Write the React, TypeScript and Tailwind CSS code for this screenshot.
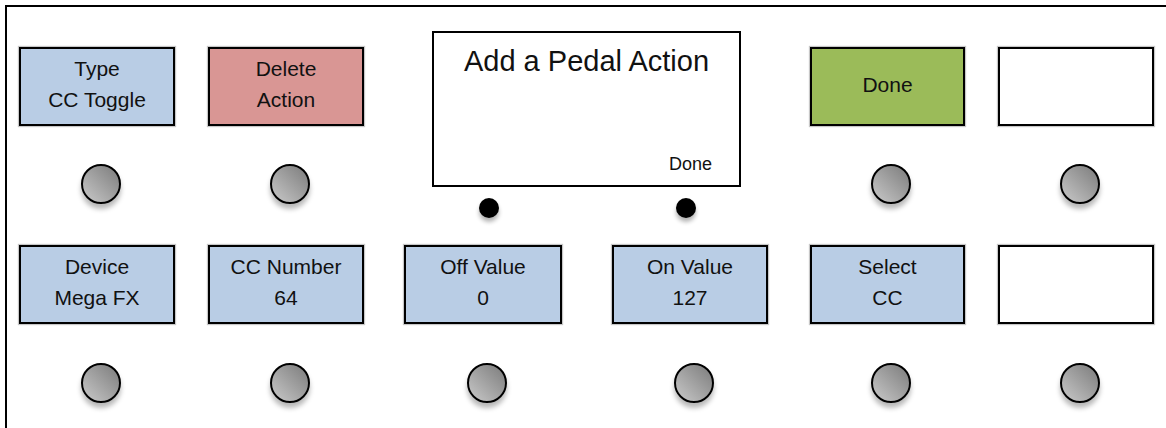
import React from "react";

const font = { fontFamily: '"Liberation Sans", Arial, Helvetica, sans-serif' };

function Box({ lines, color, w = "w-[156px]" }: { lines: string[]; color: string; w?: string }) {
  return (
    <div
      className={`${w} h-[79px] border-2 border-black ${color} shadow-[0_0_1px_1px_rgba(0,0,0,0.22)] flex flex-col items-center justify-center pb-[5px] text-[21px] leading-[31px] text-[#111]`}
    >
      {lines.map((l, i) => (
        <div key={i}>{l}</div>
      ))}
    </div>
  );
}

function Knob() {
  return (
    <div className="flex justify-center pl-[7px]">
      <div className="w-[40px] h-[40px] rounded-full border-2 border-black bg-linear-to-tr from-[#c9c9c9] to-[#7c7c7c] shadow-[0_5px_5px_rgba(0,0,0,0.28)]" />
    </div>
  );
}

function Col({ lines, color, w, className = "", knobGap = "mt-[38px]" }: { lines: string[]; color: string; w?: string; className?: string; knobGap?: string }) {
  return (
    <div className={`flex flex-col ${className}`}>
      <Box lines={lines} color={color} w={w} />
      <div className={knobGap}>
        <Knob />
      </div>
    </div>
  );
}

export default function App() {
  const blue = "bg-[#b9cde5]";
  return (
    <div className="w-[1166px] h-[428px] overflow-hidden bg-white" style={font}>
      <div className="ml-[5px] mt-[5px] w-[1250px] h-[500px] border-l-2 border-t-2 border-black">
        {/* Row 1 */}
        <div className="flex items-start pl-[12px] pt-[24px]">
          <Col lines={["Type", "CC Toggle"]} color={blue} className="mt-[16px]" />
          <Col lines={["Delete", "Action"]} color="bg-[#d99694]" className="mt-[16px] ml-[33px]" />
          <div className="ml-[68px] flex flex-col">
            <div className="w-[309px] h-[156px] border-2 border-black bg-white flex flex-col justify-between">
              <div className="text-center text-[29px] leading-[29px] pt-[14px] text-[#111]">Add a Pedal Action</div>
              <div className="self-end pr-[27px] pb-[12px] text-[18px] leading-[18px] text-[#111]">Done</div>
            </div>
            <div className="flex mt-[11px] pl-[47px]">
              <div className="w-[20px] h-[20px] rounded-full bg-black shadow-[0_4px_4px_rgba(0,0,0,0.3)]" />
              <div className="ml-[177px] w-[20px] h-[20px] rounded-full bg-black shadow-[0_4px_4px_rgba(0,0,0,0.3)]" />
            </div>
          </div>
          <Col lines={["Done"]} color="bg-[#9bbb59]" w="w-[155px]" className="mt-[16px] ml-[69px]" />
          <Col lines={[]} color="bg-white" className="mt-[16px] ml-[33px]" />
        </div>
        {/* Row 2 */}
        <div className="flex items-start pl-[12px] mt-[27px]">
          <Col lines={["Device", "Mega FX"]} color={blue} knobGap="mt-[39px]" />
          <Col lines={["CC Number", "64"]} color={blue} className="ml-[33px]" knobGap="mt-[39px]" />
          <Col lines={["Off Value", "0"]} color={blue} w="w-[158px]" className="ml-[40px]" knobGap="mt-[39px]" />
          <Col lines={["On Value", "127"]} color={blue} className="ml-[50px]" knobGap="mt-[39px]" />
          <Col lines={["Select", "CC"]} color={blue} w="w-[155px]" className="ml-[42px]" knobGap="mt-[39px]" />
          <Col lines={[]} color="bg-white" className="ml-[33px]" knobGap="mt-[39px]" />
        </div>
      </div>
    </div>
  );
}
